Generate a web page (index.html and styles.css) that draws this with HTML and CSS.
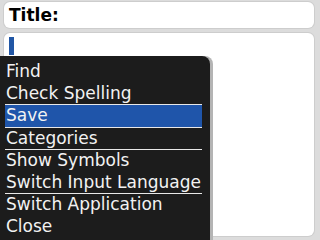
FILE: index.html
```html
<!DOCTYPE html>
<html>
<head>
    <meta charset="UTF-8">
    <title>Memo</title>
    <link rel="stylesheet" href="styles.css">
</head>
<body>
    <div class="screen">
        <div class="field title">Title:</div>
        <div class="field body"><i class="cursor"></i></div>
    </div>
    <ul class="menu">
        <li>Find</li>
        <li>Check Spelling</li>
        <li class="sep"></li>
        <li class="active">Save</li>
        <li class="sep"></li>
        <li>Categories</li>
        <li class="sep"></li>
        <li>Show Symbols</li>
        <li>Switch Input Language</li>
        <li class="sep"></li>
        <li>Switch Application</li>
        <li>Close</li>
    </ul>
</body>
</html>
```

FILE: styles.css
```css
*{margin: 0;padding: 0;list-style: none;}
html,body{
    width: 320px;
    height: 240px;
    overflow: hidden;
}
body{
    background-color: #dcdcdc;
    font-family: "DejaVu Sans", sans-serif;
    position: relative;
}
.screen{
    display: flex;
    flex-direction: column;
    gap: 5px;
    padding: 2px 6px 4px 4px;
    height: 240px;
    box-sizing: border-box;
}
.field{
    background-color: #fff;
    border-radius: 6px;
    box-shadow: 0 0 0 1px #cdcdcd;
}
.title{
    height: 26px;
    line-height: 26px;
    padding-left: 5px;
    font-weight: bold;
    font-size: 17px;
    color: #000;
}
.body{
    flex: 1;
    padding: 4px 5px;
}
.cursor{
    display: block;
    width: 5px;
    height: 18px;
    background-color: #2156a5;
}
.menu{
    position: absolute;
    left: 0; top: 56px; bottom: 0;
    width: 210px;
    padding: 5px 8px 0 5px;
    box-sizing: border-box;
    background-color: #1c1c1c;
    border-top-right-radius: 8px;
    box-shadow: 3px 0 0 #b4b4b4;
    color: #f2f2f2;
    font-size: 17px;
}
.menu li{
    height: 21.5px;
    line-height: 21.5px;
    padding-left: 1px;
    white-space: nowrap;
}
.menu .sep{
    height: 1px;
    background-color: #e8e8e8;
}
.menu .active{
    background-color: #1f55aa;
}
```
